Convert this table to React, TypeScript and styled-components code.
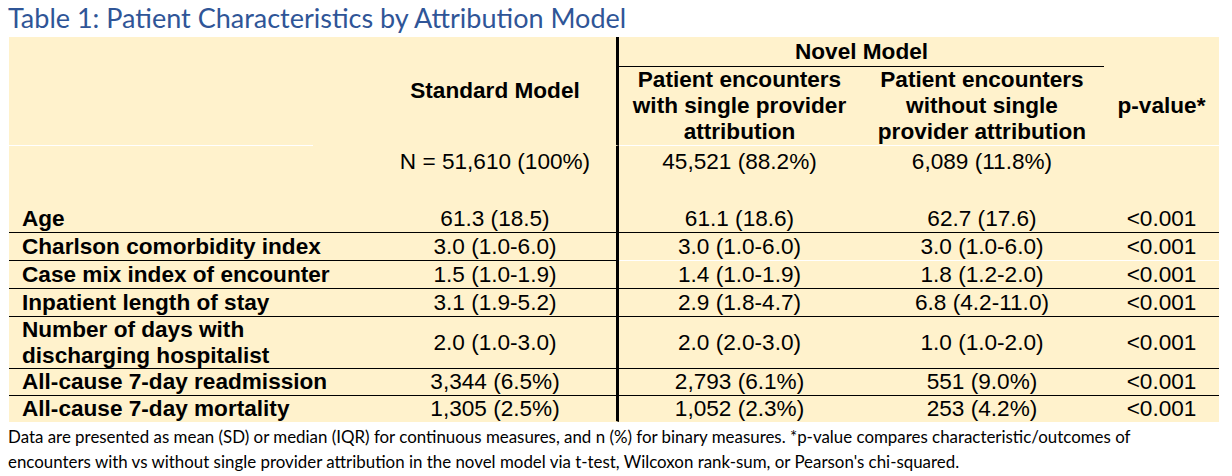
import styled, { createGlobalStyle } from 'styled-components';

const GlobalStyle = createGlobalStyle`
  body {
    margin: 0;
    background: #ffffff;
    font-family: 'Liberation Sans', Arial, sans-serif;
  }
`;

const Page = styled.div`
  width: 1232px;
  height: 476px;
  overflow: hidden;
`;

const Title = styled.h1`
  margin: 0;
  padding: 2px 0 0 8px;
  height: 35px;
  font-family: Lato, 'Open Sans', sans-serif;
  font-weight: 400;
  font-size: 27px;
  line-height: 31px;
  color: #2f5597;
  white-space: nowrap;
`;

const Table = styled.div`
  margin-left: 9px;
  width: 1210px;
  display: grid;
  grid-template-columns: 304px 306px 241px 244px 115px;
  background: #fff2cc;
  color: #000;
  font-size: 22.6px;
  line-height: 26px;
`;

type Line = 'black' | 'white' | 'none';

const lineColor = (l?: Line) => (l === 'white' ? '#ffffff' : l === 'none' ? 'transparent' : '#000000');

const Cell = styled.div<{ $line?: Line }>`
  display: flex;
  align-items: center;
  justify-content: center;
  text-align: center;
  white-space: nowrap;
  border-bottom: 1px solid ${(p) => lineColor(p.$line)};
`;

const StdCell = styled(Cell)`
  border-right: 3px solid #000;
  padding-left: 61px;
`;

const Label = styled(Cell)`
  justify-content: flex-start;
  text-align: left;
  padding-left: 13px;
  font-weight: 700;
`;

const HeadCell = styled.div<{ $col: string; $row: string; $line?: Line }>`
  grid-column: ${(p) => p.$col};
  grid-row: ${(p) => p.$row};
  display: flex;
  align-items: center;
  justify-content: center;
  text-align: center;
  white-space: nowrap;
  font-weight: 700;
  border-bottom: 1px solid ${(p) => (p.$line ? lineColor(p.$line) : 'transparent')};
`;

const StdHead = styled(HeadCell)`
  border-right: 3px solid #000;
  padding-left: 61px;
`;

const NCell = styled.div<{ $std?: boolean }>`
  height: 59px;
  display: flex;
  justify-content: center;
  align-items: flex-start;
  padding-top: 3px;
  box-sizing: border-box;
  white-space: nowrap;
  padding-left: ${(p) => (p.$std ? '61px' : '0')};
  border-right: ${(p) => (p.$std ? '3px solid #000' : 'none')};
`;

const Footnote = styled.p`
  margin: 0;
  padding: 2px 0 0 8px;
  font-family: Lato, 'Open Sans', sans-serif;
  font-size: 16.9px;
  line-height: 25px;
  color: #000;
  white-space: nowrap;
`;

type Row = {
  label: React.ReactNode;
  std: string;
  single: string;
  without: string;
  p: string;
  height: number;
  rightLine?: Line;
  leftLine?: Line;
};

const rows: Row[] = [
  { label: 'Age', std: '61.3 (18.5)', single: '61.1 (18.6)', without: '62.7 (17.6)', p: '<0.001', height: 27 },
  {
    label: 'Charlson comorbidity index',
    std: '3.0 (1.0-6.0)',
    single: '3.0 (1.0-6.0)',
    without: '3.0 (1.0-6.0)',
    p: '<0.001',
    height: 27,
    rightLine: 'white',
  },
  { label: 'Case mix index of encounter', std: '1.5 (1.0-1.9)', single: '1.4 (1.0-1.9)', without: '1.8 (1.2-2.0)', p: '<0.001', height: 27 },
  { label: 'Inpatient length of stay', std: '3.1 (1.9-5.2)', single: '2.9 (1.8-4.7)', without: '6.8 (4.2-11.0)', p: '<0.001', height: 27 },
  {
    label: (
      <>
        Number of days with
        <br />
        discharging hospitalist
      </>
    ),
    std: '2.0 (1.0-3.0)',
    single: '2.0 (2.0-3.0)',
    without: '1.0 (1.0-2.0)',
    p: '<0.001',
    height: 51,
  },
  { label: 'All-cause 7-day readmission', std: '3,344 (6.5%)', single: '2,793 (6.1%)', without: '551 (9.0%)', p: '<0.001', height: 26 },
  {
    label: 'All-cause 7-day mortality',
    std: '1,305 (2.5%)',
    single: '1,052 (2.3%)',
    without: '253 (4.2%)',
    p: '<0.001',
    height: 25,
    leftLine: 'none',
    rightLine: 'none',
  },
];

export default function App() {
  return (
    <Page>
      <GlobalStyle />
      <Title>Table 1: Patient Characteristics by Attribution Model</Title>
      <Table>
        <HeadCell $col="1" $row="1 / 3" $line="white" />
        <StdHead $col="2" $row="1 / 3">Standard Model</StdHead>
        <HeadCell $col="3 / 5" $row="1" $line="black" style={{ height: 29 }}>
          Novel Model
        </HeadCell>
        <HeadCell $col="5" $row="1" />
        <HeadCell $col="3" $row="2" $line="white" style={{ height: 78 }}>
          Patient encounters
          <br />
          with single provider
          <br />
          attribution
        </HeadCell>
        <HeadCell $col="4" $row="2" $line="white">
          Patient encounters
          <br />
          without single
          <br />
          provider attribution
        </HeadCell>
        <HeadCell $col="5" $row="2" $line="white">
          p-value*
        </HeadCell>

        <NCell />
        <NCell $std>N = 51,610 (100%)</NCell>
        <NCell>45,521 (88.2%)</NCell>
        <NCell>6,089 (11.8%)</NCell>
        <NCell />

        {rows.map((r, i) => {
          const left = r.leftLine ?? 'black';
          const right = r.rightLine ?? left;
          const h = { height: r.height };
          return [
            <Label key={`l${i}`} $line={left} style={h}>
              <span>{r.label}</span>
            </Label>,
            <StdCell key={`s${i}`} $line={left} style={h}>
              {r.std}
            </StdCell>,
            <Cell key={`a${i}`} $line={right} style={h}>
              {r.single}
            </Cell>,
            <Cell key={`b${i}`} $line={right} style={h}>
              {r.without}
            </Cell>,
            <Cell key={`p${i}`} $line={right} style={h}>
              {r.p}
            </Cell>,
          ];
        })}
      </Table>
      <Footnote>
        Data are presented as mean (SD) or median (IQR) for continuous measures, and n (%) for binary measures. *p-value
        compares characteristic/outcomes of
        <br />
        encounters with vs without single provider attribution in the novel model via t-test, Wilcoxon rank-sum, or
        Pearson's chi-squared.
      </Footnote>
    </Page>
  );
}
